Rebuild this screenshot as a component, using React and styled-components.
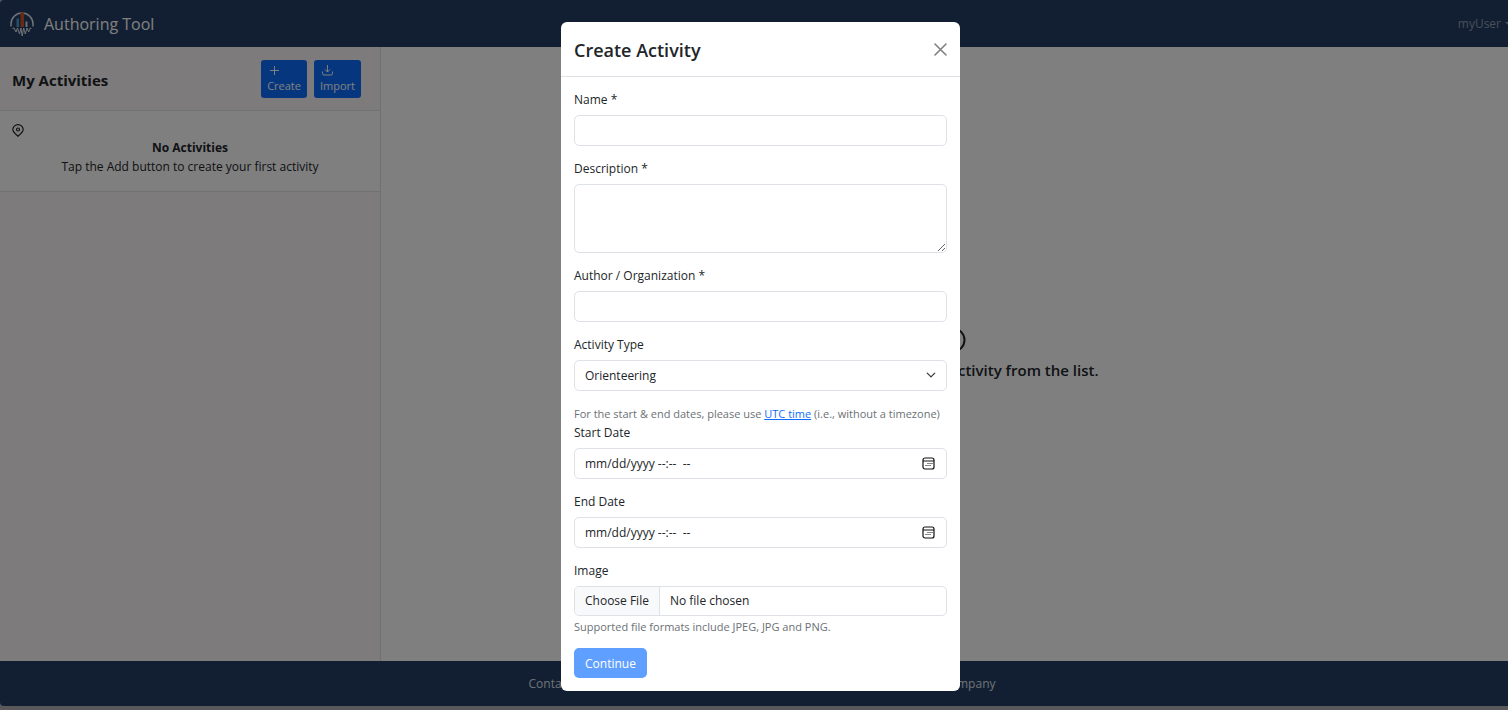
import React from "react";
import styled, { createGlobalStyle } from "styled-components";

const GlobalStyle = createGlobalStyle`
  *, *::before, *::after { box-sizing: border-box; }
  body {
    margin: 0;
    background: #b2b3b8;
    color: #212529;
    font-family: "Open Sans", "Noto Sans", sans-serif;
    font-size: 12px;
    line-height: 19px;
  }
  h1, h2, h3, p { margin: 0; }
  button, input, textarea, select { font: inherit; color: inherit; }
`;

const Viewport = styled.div`
  position: relative;
  min-height: 100vh;
  overflow: hidden;
`;

const Page = styled.div`
  display: flex;
  flex-direction: column;
  width: calc(100% + 16px);
  min-height: 100vh;
  padding-bottom: 4px;
`;

const Navbar = styled.header`
  display: flex;
  align-items: center;
  justify-content: space-between;
  height: 47px;
  padding: 0 11px 0 10px;
  background: #243e66;
  border-top-left-radius: 4px;
`;

const Brand = styled.a`
  display: flex;
  align-items: center;
  gap: 10px;
  color: #fff;
  font-size: 16px;
  line-height: 24px;
  text-decoration: none;
`;

const UserButton = styled.button`
  display: flex;
  align-items: center;
  gap: 4px;
  padding: 0;
  border: 0;
  background: none;
  color: #929fb3;
`;

const Caret = styled.span`
  border: 4px solid transparent;
  border-top-color: currentColor;
  border-bottom: 0;
`;

const Content = styled.div`
  flex: 1;
  display: flex;
  background: #fff;
`;

const Sidebar = styled.aside`
  width: 25%;
  background: #fbf6f6;
  border-right: 1px solid #dee2e6;
`;

const SidebarHeader = styled.div`
  display: flex;
  align-items: center;
  justify-content: space-between;
  height: 64px;
  padding: 0 19px 0 12px;
  border-bottom: 1px solid #dee2e6;
`;

const SidebarTitle = styled.h2`
  padding-top: 2px;
  font-size: 15px;
  line-height: 24px;
  font-weight: 700;
`;

const Actions = styled.div`
  display: flex;
  gap: 7px;
`;

const ActionButton = styled.button`
  display: flex;
  flex-direction: column;
  align-items: flex-start;
  height: 38px;
  padding: 4px 6px;
  border: 0;
  border-radius: 3px;
  background: #0d6efd;
  color: #fff;
  font-size: 11px;
  line-height: 17px;

  svg { margin-left: 1px; }
`;

const EmptyCard = styled.section`
  height: 81px;
  padding: 13px 12px;
  background: #fff;
  border-bottom: 1px solid #dee2e6;
  text-align: center;

  svg { display: block; margin-bottom: 1px; }
`;

const EmptyTitle = styled.h3`
  font-size: 12px;
  line-height: 19px;
  font-weight: 700;
`;

const Main = styled.main`
  flex: 1;
  display: flex;
  flex-direction: column;
  align-items: center;
  justify-content: center;
  gap: 5px;
  font-size: 15px;
  line-height: 24px;
  font-weight: 600;
`;

const Footer = styled.footer`
  display: flex;
  justify-content: center;
  background: #243e66;
  border-bottom-left-radius: 4px;
  color: #dee2e6;
`;

const FooterLinks = styled.div`
  display: flex;
  align-items: center;
  justify-content: space-between;
  width: 100%;
  max-width: 467px;
  padding: 13px 0;

  a { color: inherit; text-decoration: none; }
`;

const Backdrop = styled.div`
  position: absolute;
  inset: 0 -13px 0 0;
  display: flex;
  align-items: flex-start;
  justify-content: center;
  padding-top: 22px;
  background: rgba(0, 0, 0, 0.5);
`;

const Modal = styled.div`
  width: 100%;
  max-width: 399px;
  background: #fff;
  border-radius: 6px;
`;

const ModalHeader = styled.div`
  display: flex;
  align-items: center;
  justify-content: space-between;
  height: 55px;
  padding: 0 13px;
  border-bottom: 1px solid #dee2e6;
`;

const ModalTitle = styled.h1`
  padding-top: 1px;
  font-size: 18px;
  line-height: 28px;
  font-weight: 600;
`;

const CloseButton = styled.button`
  display: flex;
  padding: 0;
  border: 0;
  background: none;
  color: #808080;
`;

const Form = styled.form`
  padding: 13px;
`;

const Field = styled.div`
  display: flex;
  flex-direction: column;
  margin-bottom: 13px;
`;

const Label = styled.label`
  margin-bottom: 6px;
`;

const Input = styled.input`
  width: 100%;
  height: 31px;
  padding: 5px 10px;
  background: #fff;
  border: 1px solid #dee2e6;
  border-radius: 5px;

  &::placeholder { color: #212529; opacity: 1; }
`;

const FileInput = styled(Input)`
  height: 30px;
  padding: 0;
  line-height: 28px;

  &::file-selector-button {
    height: 28px;
    margin: 0 10px 0 0;
    padding: 0 10px;
    border: 0;
    border-right: 1px solid #dee2e6;
    border-radius: 4px 0 0 4px;
    background: #f8f9fa;
    color: #212529;
    font: inherit;
  }
`;

const TextArea = styled.textarea`
  display: block;
  width: 100%;
  height: 69px;
  padding: 5px 10px;
  background: #fff;
  border: 1px solid #dee2e6;
  border-radius: 5px;
  resize: vertical;
`;

const ControlBox = styled.div`
  position: relative;
`;

const Chevron = styled.svg`
  position: absolute;
  top: 10px;
  right: 11px;
  pointer-events: none;
`;

const PickerButton = styled.button`
  position: absolute;
  top: 9px;
  right: 12px;
  display: flex;
  padding: 0;
  border: 0;
  background: none;
`;

const Select = styled.select`
  display: block;
  width: 100%;
  height: 31px;
  padding: 0 30px 0 10px;
  background: #fff;
  border: 1px solid #dee2e6;
  border-radius: 5px;
  appearance: none;
`;

const Hint = styled.p`
  color: #6c7176;
  font-size: 11px;

  a { color: #0d6efd; }
`;

const FileHint = styled(Hint)`
  margin-top: 3px;
  line-height: 16px;
`;

const SubmitButton = styled.button`
  display: block;
  height: 30px;
  padding: 0 11px;
  border: 0;
  border-radius: 5px;
  background: #5f9fff;
  color: #fff;
`;

function Logo() {
  return (
    <svg width="24" height="26" viewBox="0 0 24 26" fill="none" aria-hidden="true">
      <path d="M1 15.500V13a11 11 0 0 1 22 0v2.500" stroke="#e4e7ee" strokeWidth="1.500" />
      <path d="M6.500 7.500H9v8.500H6.500z" fill="#4b9fd0" />
      <path d="M10.500 1.500H14V16h-3.500z" fill="#d2552b" />
      <path d="M15.500 10.500h2V16h-2z" fill="#dfe3e8" />
      <path d="M2.500 17.500L4 17l2 4 1.500-4 2 6 1.500-6 1.200 8 1.500-8 1.600 6 1.700-6 1.700 4 1.500-4 1.300.5" stroke="#e4e7ee" strokeWidth="1" />
    </svg>
  );
}

function CalendarIcon() {
  return (
    <svg width="13" height="13" viewBox="0 0 13 13" fill="none" stroke="#111" aria-hidden="true">
      <rect x="1" y="1" width="11" height="11" rx="2" strokeWidth="1.200" />
      <path d="M1 4h11" />
      <path d="M5.500 6.500h1M7.500 6.500h1M9.500 6.500h1M3.500 8.500h1M5.500 8.500h1M7.500 8.500h1" strokeWidth="1.200" />
    </svg>
  );
}

function TextField({ id, label }) {
  return (
    <Field>
      <Label htmlFor={id}>{label}</Label>
      <Input id={id} type="text" />
    </Field>
  );
}

function DateField({ id, label }) {
  return (
    <Field>
      <Label htmlFor={id}>{label}</Label>
      <ControlBox>
        <Input id={id} type="text" placeholder="mm/dd/yyyy --:--  --" />
        <PickerButton type="button" aria-label={`Pick ${label}`}>
          <CalendarIcon />
        </PickerButton>
      </ControlBox>
    </Field>
  );
}

export default function App() {
  return (
    <Viewport>
      <GlobalStyle />
      <Page>
        <Navbar>
          <Brand href="#"><Logo />Authoring Tool</Brand>
          <UserButton type="button">myUser<Caret /></UserButton>
        </Navbar>
        <Content>
          <Sidebar>
            <SidebarHeader>
              <SidebarTitle>My Activities</SidebarTitle>
              <Actions>
                <ActionButton type="button">
                  <svg width="13" height="13" viewBox="0 0 13 13" fill="none" stroke="currentColor" aria-hidden="true">
                    <path d="M6.500 2v9M2 6.500h9" />
                  </svg>
                  Create
                </ActionButton>
                <ActionButton type="button">
                  <svg width="13" height="13" viewBox="0 0 13 13" fill="none" stroke="currentColor" aria-hidden="true">
                    <path d="M6.500 1v7M4 5.500L6.500 8 9 5.500M1.500 7.500v2q0 1.500 1.500 1.500h7q1.500 0 1.500-1.500v-2" />
                  </svg>
                  Import
                </ActionButton>
              </Actions>
            </SidebarHeader>
            <EmptyCard>
              <svg width="12" height="13" viewBox="0 0 12 13" fill="none" stroke="#212529" strokeWidth="1.200" aria-hidden="true">
                <path d="M6 12.200C3.500 10.200.8 8 .8 5.600a5.200 4.900 0 0 1 10.400 0C11.200 8 8.500 10.200 6 12.200z" />
                <circle cx="6" cy="5.500" r="1.500" />
              </svg>
              <EmptyTitle>No Activities</EmptyTitle>
              <p>Tap the Add button to create your first activity</p>
            </EmptyCard>
          </Sidebar>
          <Main>
            <svg width="26" height="26" viewBox="0 0 26 26" fill="none" stroke="#212529" strokeWidth="2" aria-hidden="true">
              <circle cx="13" cy="13" r="11.500" />
              <path d="M13 12v6M13 8v2" />
            </svg>
            <p>Please choose your activity from the list.</p>
          </Main>
        </Content>
        <Footer>
          <FooterLinks>
            <a href="#">Contact Us</a>
            <a href="#">Privacy Policy</a>
            <span>Powered by Our Company</span>
          </FooterLinks>
        </Footer>
      </Page>
      <Backdrop>
        <Modal role="dialog" aria-modal="true" aria-labelledby="modal-title">
          <ModalHeader>
            <ModalTitle id="modal-title">Create Activity</ModalTitle>
            <CloseButton type="button" aria-label="Close">
              <svg width="13" height="13" viewBox="0 0 13 13" fill="none" stroke="currentColor" strokeWidth="1.600" strokeLinecap="round">
                <path d="M1 1l11 11M12 1L1 12" />
              </svg>
            </CloseButton>
          </ModalHeader>
          <Form>
            <TextField id="name" label="Name *" />
            <Field>
              <Label htmlFor="description">Description *</Label>
              <TextArea id="description" />
            </Field>
            <TextField id="author" label="Author / Organization *" />
            <Field>
              <Label htmlFor="type">Activity Type</Label>
              <ControlBox>
                <Select id="type" defaultValue="Orienteering">
                  <option>Orienteering</option>
                </Select>
                <Chevron width="10" height="10" viewBox="0 0 16 16" fill="none" stroke="#343a40" strokeWidth="2" strokeLinecap="round" strokeLinejoin="round" aria-hidden="true">
                  <path d="m2 5 6 6 6-6" />
                </Chevron>
              </ControlBox>
            </Field>
            <Hint>
              For the start &amp; end dates, please use <a href="#">UTC time</a> (i.e., without a timezone)
            </Hint>
            <DateField id="start" label="Start Date" />
            <DateField id="end" label="End Date" />
            <Field>
              <Label htmlFor="image">Image</Label>
              <FileInput id="image" type="file" />
              <FileHint>Supported file formats include JPEG, JPG and PNG.</FileHint>
            </Field>
            <SubmitButton type="submit">Continue</SubmitButton>
          </Form>
        </Modal>
      </Backdrop>
    </Viewport>
  );
}
